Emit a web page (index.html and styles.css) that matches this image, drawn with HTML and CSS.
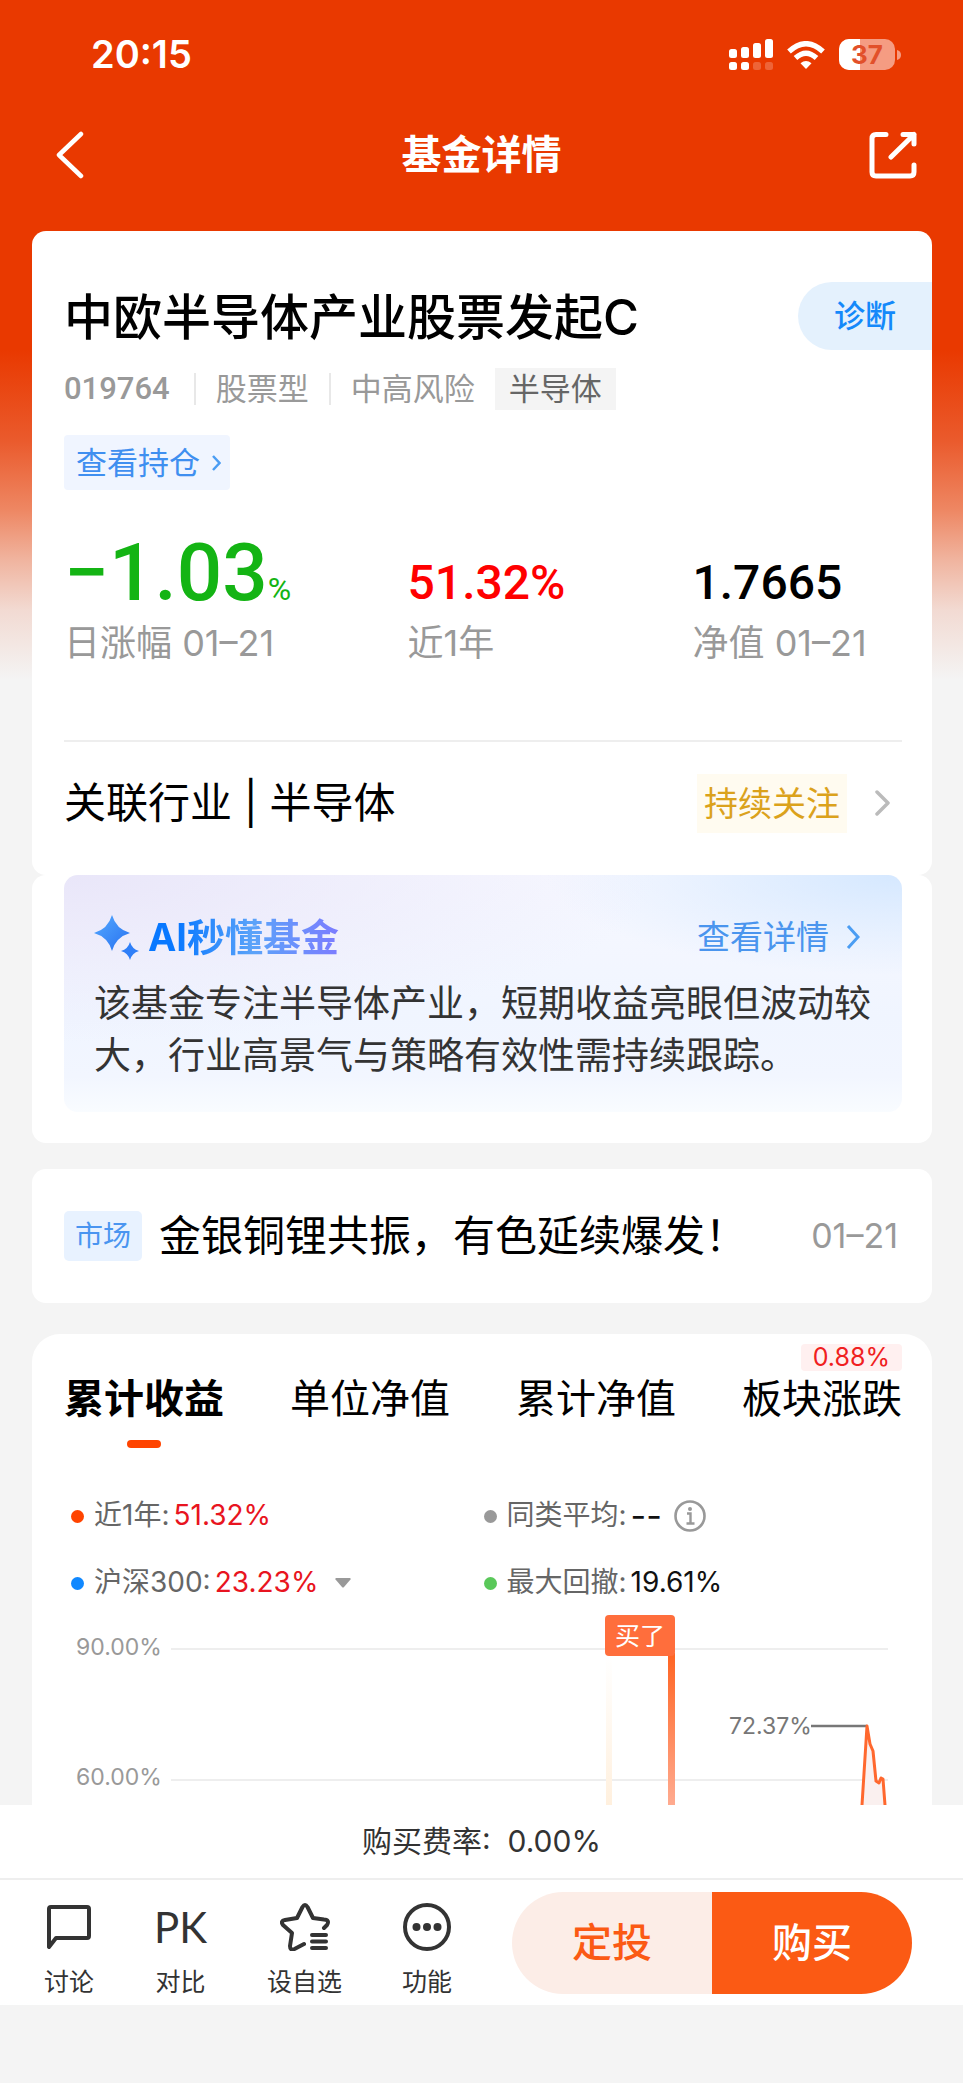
FILE: index.html
```html
<!DOCTYPE html>
<html lang="zh-CN">
<head>
<meta charset="utf-8">
<meta name="viewport" content="width=device-width, initial-scale=1">
<title>基金详情</title>
<link rel="stylesheet" href="styles.css">
</head>
<body>
<div class="page">
  <div class="status-bar">
    <span class="status-time">20:15</span>
    <div class="status-icons">
      <svg width="44" height="32" viewBox="0 0 44 32" fill="#fff" aria-hidden="true">
        <rect x="0" y="10" width="8" height="9" rx="2.5"/><rect x="12" y="8" width="8" height="11" rx="2.5"/><rect x="24" y="4" width="8" height="15" rx="2.5"/><rect x="36" y="0" width="8" height="19" rx="2.5"/>
        <rect x="0" y="23" width="8" height="8" rx="2.5"/><rect x="12" y="23" width="8" height="8" rx="2.5"/><rect x="24" y="23" width="8" height="8" rx="2.5" opacity=".22"/><rect x="36" y="23" width="8" height="8" rx="2.5" opacity=".22"/>
      </svg>
      <svg width="38" height="28" viewBox="0 0 38 28" fill="none" stroke="#fff" stroke-width="5.4" aria-hidden="true">
        <path d="M2 10.500Q19-5 36 10.500"/><path d="M8.500 17Q19 7.500 29.500 17"/><path d="M13.500 22.200Q19 17.800 24.500 22.200L19 28Z" fill="#fff" stroke="none"/>
      </svg>
      <svg width="62" height="32" viewBox="0 0 62 32" aria-label="37">
        <clipPath id="level"><rect width="21" height="32"/></clipPath>
        <rect width="56" height="31" rx="10" fill="#f59c82"/>
        <rect width="56" height="31" rx="10" fill="#fff" clip-path="url(#level)"/>
        <path d="M58 11q4 1 4 5t-4 5z" fill="#f59c82"/>
        <text x="28" y="25" text-anchor="middle" class="battery-text">37</text>
      </svg>
    </div>
  </div>

  <header class="nav">
    <button class="icon-button" aria-label="返回"><svg width="28" height="48" viewBox="0 0 28 48" fill="none" stroke="#fff" stroke-width="4.500" stroke-linecap="round" stroke-linejoin="round"><path d="M25 3 3 24 25 45"/></svg></button>
    <h1 class="nav-title">基金详情</h1>
    <button class="icon-button" aria-label="分享"><svg width="48" height="48" viewBox="0 0 48 48" fill="none" stroke="#fff" stroke-width="5" stroke-linecap="round" stroke-linejoin="round"><path d="M17 3.500H7Q3 3.500 3 7.500V41Q3 45 7 45H41Q45 45 45 41V34M34 3.500H45V13M45 3.500 22 26"/></svg></button>
  </header>

  <main class="content">
    <section class="card summary">
      <div class="title-row">
        <h2 class="fund-name">中欧半导体产业股票发起C</h2>
        <button class="diagnose">诊断</button>
      </div>
      <div class="meta">
        <span class="code">019764</span><span class="meta-item">股票型</span><span class="meta-item">中高风险</span><span class="meta-tag">半导体</span>
      </div>
      <a class="holdings" href="#">查看持仓
        <svg width="9" height="16" viewBox="0 0 9 16" fill="none" stroke="#4b9df3" stroke-width="2.500"><path d="M1 1 7.500 8 1 15"/></svg>
      </a>
      <div class="stats">
        <div class="stat"><div class="value value-main">−1.03<small class="unit">%</small></div><div class="label">日涨幅 01–21</div></div>
        <div class="stat"><div class="value value-up">51.32%</div><div class="label">近1年</div></div>
        <div class="stat"><div class="value">1.7665</div><div class="label">净值 01–21</div></div>
      </div>
      <a class="industry" href="#">
        <span>关联行业 | 半导体</span>
        <span class="follow">持续关注</span>
        <svg width="15" height="26" viewBox="0 0 15 26" fill="none" stroke="#bbb" stroke-width="3.500" stroke-linecap="round" stroke-linejoin="round"><path d="M2 2 13 13 2 24"/></svg>
      </a>
    </section>

    <section class="card ai-card">
      <div class="ai-panel">
        <div class="ai-head">
          <svg width="46" height="46" viewBox="0 0 46 46" aria-hidden="true">
            <defs><linearGradient id="spark" x1="0" x2="1" y1="0" y2="1"><stop offset="0" stop-color="#55aaff"/><stop offset="1" stop-color="#2670f0"/></linearGradient></defs>
            <path d="M18 1Q22 15 36 19Q22 23 18 37Q14 23 0 19Q14 15 18 1Z" fill="url(#spark)"/>
            <path d="M36 28Q38 35 45 37Q38 39 36 46Q34 39 27 37Q34 35 36 28Z" fill="#2f7ff8"/>
          </svg>
          <h3 class="ai-title">AI秒懂基金</h3>
          <a class="ai-more" href="#">查看详情
            <svg width="14" height="24" viewBox="0 0 14 24" fill="none" stroke="#4b9df3" stroke-width="3"><path d="M2 1 12 12 2 23"/></svg>
          </a>
        </div>
        <p class="ai-text">该基金专注半导体产业，短期收益亮眼但波动较大，行业高景气与策略有效性需持续跟踪。</p>
      </div>
    </section>

    <a class="card news" href="#">
      <span class="news-tag">市场</span>
      <span class="news-title">金银铜锂共振，有色延续爆发！</span>
      <time class="news-date">01–21</time>
    </a>

    <section class="card performance">
      <div class="tabs" role="tablist">
        <button class="tab tab-active" role="tab" aria-selected="true">累计收益</button>
        <button class="tab" role="tab">单位净值</button>
        <button class="tab" role="tab">累计净值</button>
        <button class="tab" role="tab">板块涨跌<span class="tab-badge">0.88%</span></button>
      </div>
      <div class="legend">
        <div class="legend-item"><i class="dot dot-fund"></i>近1年:<b class="num up">51.32%</b></div>
        <div class="legend-item"><i class="dot dot-peer"></i>同类平均:<b class="num dash">--</b>
          <svg class="info" width="32" height="32" viewBox="0 0 32 32" fill="none" stroke="#999" stroke-width="2.600"><circle cx="16" cy="16" r="14.500"/><path d="M13 13.500H16.500V23.500M12.500 23.500H20.500" stroke-width="2.400"/><circle cx="16" cy="9" r="2" fill="#999" stroke="none"/></svg>
        </div>
        <div class="legend-item"><i class="dot dot-index"></i>沪深300:<b class="num up">23.23%</b><svg class="caret" width="16" height="10" viewBox="0 0 16 10" fill="#999"><path d="M1 0H15Q16 0 15.500 1.500L9 9Q8 10 7 9L.5 1.500Q0 0 1 0Z"/></svg></div>
        <div class="legend-item"><i class="dot dot-drawdown"></i>最大回撤:<b class="num">19.61%</b></div>
      </div>
      <svg class="chart" viewBox="0 0 838 202" role="img" aria-label="累计收益走势">
        <defs>
          <linearGradient id="buy" x1="0" x2="0" y1="0" y2="1"><stop offset="0" stop-color="#ff6422"/><stop offset="1" stop-color="#ffab90"/></linearGradient>
          <linearGradient id="faint" x1="0" x2="0" y1="0" y2="1"><stop offset="0" stop-color="#fff"/><stop offset="1" stop-color="#fff0de"/></linearGradient>
        </defs>
        <path d="M107 46H824M107 177H824" stroke="#eee" stroke-width="2"/>
        <text class="axis" x="12" y="52">90.00%</text>
        <text class="axis" x="12" y="182">60.00%</text>
        <rect x="542" y="53" width="6" height="149" fill="url(#faint)"/>
        <rect x="604" y="50" width="7" height="152" fill="url(#buy)"/>
        <rect x="541" y="12" width="70" height="41" rx="4" fill="#ff6e3c"/>
        <text class="flag" x="576" y="42" text-anchor="middle">买了</text>
        <text class="axis peak" x="665" y="131">72.37%</text>
        <path d="M747 123H803" stroke="#777" stroke-width="2.500"/>
        <path d="M798 202 803 123 806 141 809 148 812 178 815 180 817 175 819 176 821 202Z" fill="#faf0ef"/>
        <path d="M798 202 803 123 806 141 809 148 812 178 815 180 817 175 819 176 821 202" fill="none" stroke="#ff682e" stroke-width="3" stroke-linejoin="round"/>
      </svg>
    </section>
  </main>

  <footer class="dock">
    <p class="fee">购买费率:&nbsp; 0.00%</p>
    <div class="toolbar">
      <button class="tool"><svg width="46" height="48" viewBox="0 0 46 48" fill="none" stroke="#333" stroke-width="4" stroke-linejoin="round"><path d="M5 4H41Q43 4 43 6V33Q43 35 41 35H10L3 44V6Q3 4 5 4Z"/></svg><span>讨论</span></button>
      <button class="tool"><span class="pk">PK</span><span>对比</span></button>
      <button class="tool"><svg width="50" height="48" viewBox="0 0 50 48" fill="none" stroke="#333" stroke-width="4" stroke-linecap="round" stroke-linejoin="round"><path d="M44 25 47 22Q50 17 44 16.500L33 15 27.500 4Q25 0 22.500 4L17 15 5 17Q0 18 3 22L12 30 10 43Q10 48 14.500 46L24 41"/><path d="M32 32H46M32 38.500H46M32 45H46"/></svg><span>设自选</span></button>
      <button class="tool"><svg width="50" height="48" viewBox="0 0 50 48"><circle cx="25" cy="24" r="22" fill="none" stroke="#333" stroke-width="4"/><g fill="#333"><circle cx="14.500" cy="24" r="4"/><circle cx="25" cy="24" r="4"/><circle cx="35.500" cy="24" r="4"/></g></svg><span>功能</span></button>
      <div class="actions">
        <button class="action action-plan">定投</button>
        <button class="action action-buy">购买</button>
      </div>
    </div>
  </footer>
</div>
</body>
</html>
```
FILE: styles.css
```css
* {
  box-sizing: border-box;
}

body {
  margin: 0;
  background: #f4f4f4;
  color: #000;
  font-family: Inter, "Noto Sans CJK SC", sans-serif;
  line-height: 1.4;
}

h1, h2, h3, p {
  margin: 0;
}

button {
  padding: 0;
  border: 0;
  background: none;
  color: inherit;
  font-family: inherit;
  line-height: inherit;
}

a {
  color: inherit;
  text-decoration: none;
}

svg {
  display: block;
  flex: none;
}

.page {
  min-height: 100vh;
  background: linear-gradient(#e93900 350px, #ea5a2c 440px, #ee8763 510px, #f0b49f 560px, #f2dad2 610px, #f4f4f4 680px);
}

/* Status bar and navigation */
.status-bar {
  display: flex;
  align-items: center;
  justify-content: space-between;
  height: 110px;
  padding: 0 62px 0 91px;
  color: #fff;
}

.status-time {
  font-size: 38px;
  font-weight: 600;
}

.status-icons {
  display: flex;
  align-items: center;
  gap: 14px;
}

.battery-text {
  fill: #e2502a;
  font: 700 26px Inter, sans-serif;
}

.nav {
  display: flex;
  align-items: center;
  justify-content: space-between;
  height: 90px;
  padding: 0 46px;
  color: #fff;
}

.icon-button {
  display: flex;
  justify-content: center;
  width: 48px;
}

.nav-title {
  font-size: 40px;
  font-weight: 600;
  line-height: 60px;
}

/* Cards */
.content {
  padding: 31px 31px 0 32px;
}

.card {
  padding: 0 30px 0 32px;
  border-radius: 14px;
  background: #fff;
}

.summary {
  padding-top: 51px;
  padding-bottom: 11px;
}

.title-row {
  display: flex;
  align-items: center;
  justify-content: space-between;
  margin-right: -30px;
}

.fund-name {
  padding-top: 4px;
  font-size: 49px;
  font-weight: 500;
  line-height: 64px;
}

.diagnose {
  width: 134px;
  height: 68px;
  border-radius: 34px 0 0 34px;
  background: #e4f1fd;
  color: #1489fa;
  font-size: 31px;
  font-weight: 500;
}

.meta {
  display: flex;
  align-items: center;
  height: 42px;
  margin-top: 18px;
  color: #999;
  font-size: 31px;
}

.code {
  padding-right: 24px;
  font-family: Roboto, sans-serif;
  font-weight: 500;
}

.meta-item {
  padding: 0 20px;
  border-left: 2px solid #e8e8e8;
  line-height: 32px;
}

.meta-tag {
  padding: 0 14px;
  background: #f4f4f4;
  color: #666;
  line-height: 42px;
}

.holdings {
  display: flex;
  align-items: center;
  gap: 12px;
  width: fit-content;
  height: 55px;
  margin-top: 25px;
  padding: 0 9px 0 12px;
  border-radius: 4px;
  background: #f0f5ff;
  color: #3f8ff0;
  font-size: 31px;
}

.stats {
  display: grid;
  grid-template-columns: 41fr 34fr 25fr;
  align-items: end;
  margin-top: 43px;
}

.value {
  font-family: Roboto, sans-serif;
  font-size: 48px;
  font-weight: 500;
  line-height: 60px;
  white-space: nowrap;
}

.value-main {
  color: #14b414;
  font-size: 80px;
  line-height: 80px;
}

.value-up {
  color: #f00;
}

.unit {
  font-size: 32px;
  font-weight: 400;
  line-height: 32px;
}

.label {
  margin-top: 8px;
  color: #999;
  font-size: 36px;
  line-height: 44px;
  white-space: nowrap;
}

.industry {
  display: flex;
  align-items: center;
  height: 124px;
  margin-top: 75px;
  padding-right: 12px;
  border-top: 2px solid #eee;
  font-size: 42px;
}

.follow {
  margin: 0 28px 0 auto;
  padding: 0 7px;
  background: #fffbf0;
  color: #dba21c;
  font-size: 34px;
  line-height: 59px;
}

/* AI digest */
.ai-card {
  padding-bottom: 31px;
}

.ai-panel {
  padding: 40px 24px 30px 30px;
  border-radius: 14px;
  background:
    radial-gradient(ellipse at 100% 0, #d5e8ff, transparent 30%),
    radial-gradient(ellipse at 0 0, #e9e6f9, transparent 50%),
    linear-gradient(#f7f8ff, #f0f5ff 60%, #f2f6ff 85%, #f9fcff);
}

.ai-head {
  display: flex;
  align-items: center;
  height: 44px;
  padding-right: 18px;
}

.ai-title {
  margin-left: 8px;
  background: linear-gradient(90deg, #0878ff 15%, #5ba3f9 55%, #7c7cff);
  background-clip: text;
  color: transparent;
  font-size: 38px;
  font-weight: 700;
  line-height: 50px;
}

.ai-more {
  display: flex;
  align-items: center;
  gap: 17px;
  margin-left: auto;
  color: #4a95ee;
  font-size: 33px;
}

.ai-text {
  margin-top: 19px;
  color: #333;
  font-size: 37px;
  line-height: 52px;
}

/* News */
.news {
  display: flex;
  align-items: center;
  height: 134px;
  margin-top: 26px;
}

.news-tag {
  padding: 0 11px;
  border-radius: 5px;
  background: #e8f2ff;
  color: #4a95f0;
  font-size: 28px;
  line-height: 50px;
}

.news-title {
  margin-left: 17px;
  font-size: 42px;
}

.news-date {
  margin: 0 4px 0 auto;
  color: #999;
  font-size: 34px;
}

/* Performance */
.performance {
  margin-top: 31px;
  padding-top: 40px;
  border-radius: 28px 28px 0 0;
}

.tabs {
  display: flex;
  justify-content: space-between;
}

.tab {
  position: relative;
  padding-bottom: 24px;
  font-size: 40px;
  line-height: 50px;
}

.tab-active {
  font-weight: 700;
}

.tab-active::after {
  position: absolute;
  bottom: 0;
  left: 50%;
  width: 34px;
  height: 8px;
  margin-left: -17px;
  border-radius: 4px;
  background: #ff4400;
  content: "";
}

.tab-badge {
  position: absolute;
  top: -30px;
  right: 0;
  padding: 0 12px;
  border-radius: 4px;
  background: #fff0f0;
  color: #f02020;
  font-size: 25px;
  line-height: 27px;
}

.legend {
  display: grid;
  grid-template-columns: 416fr 422fr;
  row-gap: 27px;
  margin-top: 48px;
  padding-left: 7px;
}

.legend-item {
  display: flex;
  align-items: center;
  height: 40px;
  color: #666;
  font-size: 28px;
}

.dot {
  width: 13px;
  height: 13px;
  margin-right: 10px;
  border-radius: 50%;
}

.dot-fund { background: #ff4400; }
.dot-peer { background: #999; }
.dot-index { background: #1088ff; }
.dot-drawdown { background: #5ac85a; }

.num {
  margin-left: 4px;
  color: #111;
  font-weight: 400;
}

.up { color: #e81420; }
.dash { font-size: 34px; }

.info { margin-left: 12px; }
.caret { margin-left: 17px; }

.chart {
  width: 100%;
  height: auto;
}

.axis {
  fill: #999;
  font-size: 23px;
}

.peak { fill: #777; }

.flag {
  fill: #fff;
  font-size: 25px;
}

/* Bottom dock */
.dock {
  background: #fff;
  color: #333;
}

.fee {
  border-bottom: 2px solid #eee;
  font-size: 30px;
  line-height: 73px;
  text-align: center;
}

.toolbar {
  display: flex;
  align-items: center;
  gap: 60px;
  height: 125px;
  padding: 0 51px 0 44px;
}

.tool {
  display: flex;
  flex: none;
  flex-direction: column;
  align-items: center;
  gap: 13px;
  padding-top: 18px;
  font-size: 25px;
  line-height: 36px;
}

.pk {
  font: 400 42px/48px Lato, sans-serif;
}

.actions {
  display: flex;
  flex: 1;
  height: 102px;
  overflow: hidden;
  border-radius: 51px;
}

.action {
  flex: 1;
  font-size: 40px;
  font-weight: 500;
}

.action-plan {
  background: #fcede7;
  color: #fb5a14;
}

.action-buy {
  background: #fb5a14;
  color: #fff;
}
```
